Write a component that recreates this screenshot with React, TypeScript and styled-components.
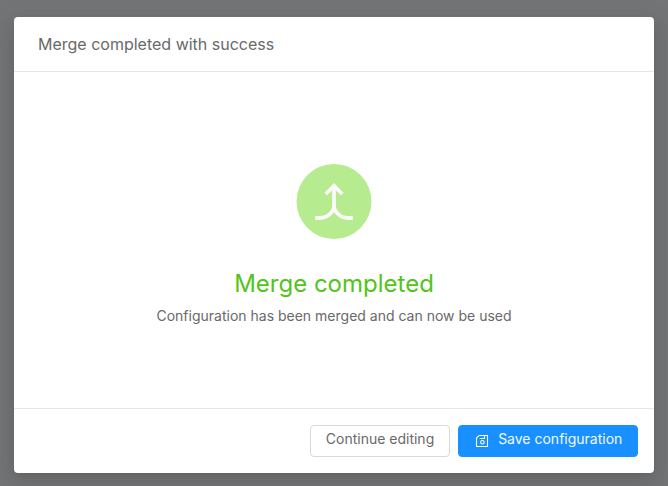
import React from 'react';
import styled, { createGlobalStyle } from 'styled-components';

const GlobalStyle = createGlobalStyle`
  *, *::before, *::after { box-sizing: border-box; }
  body {
    margin: 0;
    background: #737476;
    font-family: Inter, 'Liberation Sans', sans-serif;
    font-size: 14px;
    font-weight: 400;
    color: #696969;
  }
`;

const Overlay = styled.div`
  height: 100vh;
  padding: 17px 14px 13px;
  overflow: hidden;
`;

const Dialog = styled.section`
  display: flex;
  flex-direction: column;
  height: 456px;
  background: #fff;
  border-radius: 4px;
  box-shadow: 0 3px 6px -4px rgba(0, 0, 0, 0.12), 0 6px 16px rgba(0, 0, 0, 0.08),
    0 9px 28px 8px rgba(0, 0, 0, 0.05);
`;

const Header = styled.header`
  height: 55px;
  padding: 16px 24px;
  border-bottom: 1px solid #e6e6e6;
`;

const Title = styled.h1`
  margin: 0;
  font-size: 16px;
  font-weight: inherit;
  line-height: 22px;
`;

const Body = styled.main`
  flex: 1;
  display: flex;
  flex-direction: column;
  align-items: center;
  padding-top: 92px;
`;

const Badge = styled.div`
  display: flex;
  width: 76px;
  height: 75px;
`;

const Heading = styled.h2`
  margin: 26px 0 0;
  font-size: 24px;
  font-weight: inherit;
  line-height: 38px;
  color: #52c41a;
`;

const Message = styled.p`
  margin: 2px 0 0;
  line-height: 22px;
`;

const Footer = styled.footer`
  display: flex;
  justify-content: flex-end;
  gap: 8px;
  height: 65px;
  padding: 16px;
  border-top: 1px solid #e6e6e6;
`;

const Button = styled.button<{ $primary?: boolean }>`
  display: flex;
  align-items: center;
  justify-content: center;
  gap: 9.5px;
  width: ${(p) => (p.$primary ? 180 : 140)}px;
  height: 32px;
  padding: 0 0 4px ${(p) => (p.$primary ? 1 : 0)}px;
  border: 1px solid ${(p) => (p.$primary ? '#1890ff' : '#d9d9d9')};
  border-radius: 4px;
  background: ${(p) => (p.$primary ? '#1890ff' : '#fff')};
  color: ${(p) => (p.$primary ? '#f3f9ff' : '#696969')};
  font: inherit;
  line-height: 22px;

  svg { margin-top: 4px; }
`;

const MergeIcon = () => (
  <svg width="76" height="75" viewBox="0 0 76 75" fill="none" stroke="#fafafa" strokeWidth="3.8">
    <circle cx="38" cy="37.5" r="37.5" fill="#b7eb8f" stroke="none" />
    <path d="M29.8 30 38 21.8 46.2 30M38 22V44" />
    <path d="M19.2 54H24C31.5 54 38 48 38 41.5C38 48 44.5 54 52 54H56.8" />
  </svg>
);

const SaveIcon = () => (
  <svg width="14" height="14" viewBox="0 0 14 14" fill="none" stroke="#fff" strokeWidth="1.1">
    <path d="M4.4 1.5H12.5V12.5H1.5V4.4Q1.5 4 1.8 3.7L3.7 1.8Q4 1.5 4.4 1.5Z" strokeLinejoin="round" />
    <path d="M4.8 4.5H9.5V1.5" />
    <circle cx="7.4" cy="8.2" r="1.75" />
  </svg>
);

export default function App() {
  return (
    <Overlay>
      <GlobalStyle />
      <Dialog role="dialog">
        <Header>
          <Title>Merge completed with success</Title>
        </Header>
        <Body>
          <Badge>
            <MergeIcon />
          </Badge>
          <Heading>Merge completed</Heading>
          <Message>Configuration has been merged and can now be used</Message>
        </Body>
        <Footer>
          <Button>Continue editing</Button>
          <Button $primary>
            <SaveIcon />
            Save configuration
          </Button>
        </Footer>
      </Dialog>
    </Overlay>
  );
}
